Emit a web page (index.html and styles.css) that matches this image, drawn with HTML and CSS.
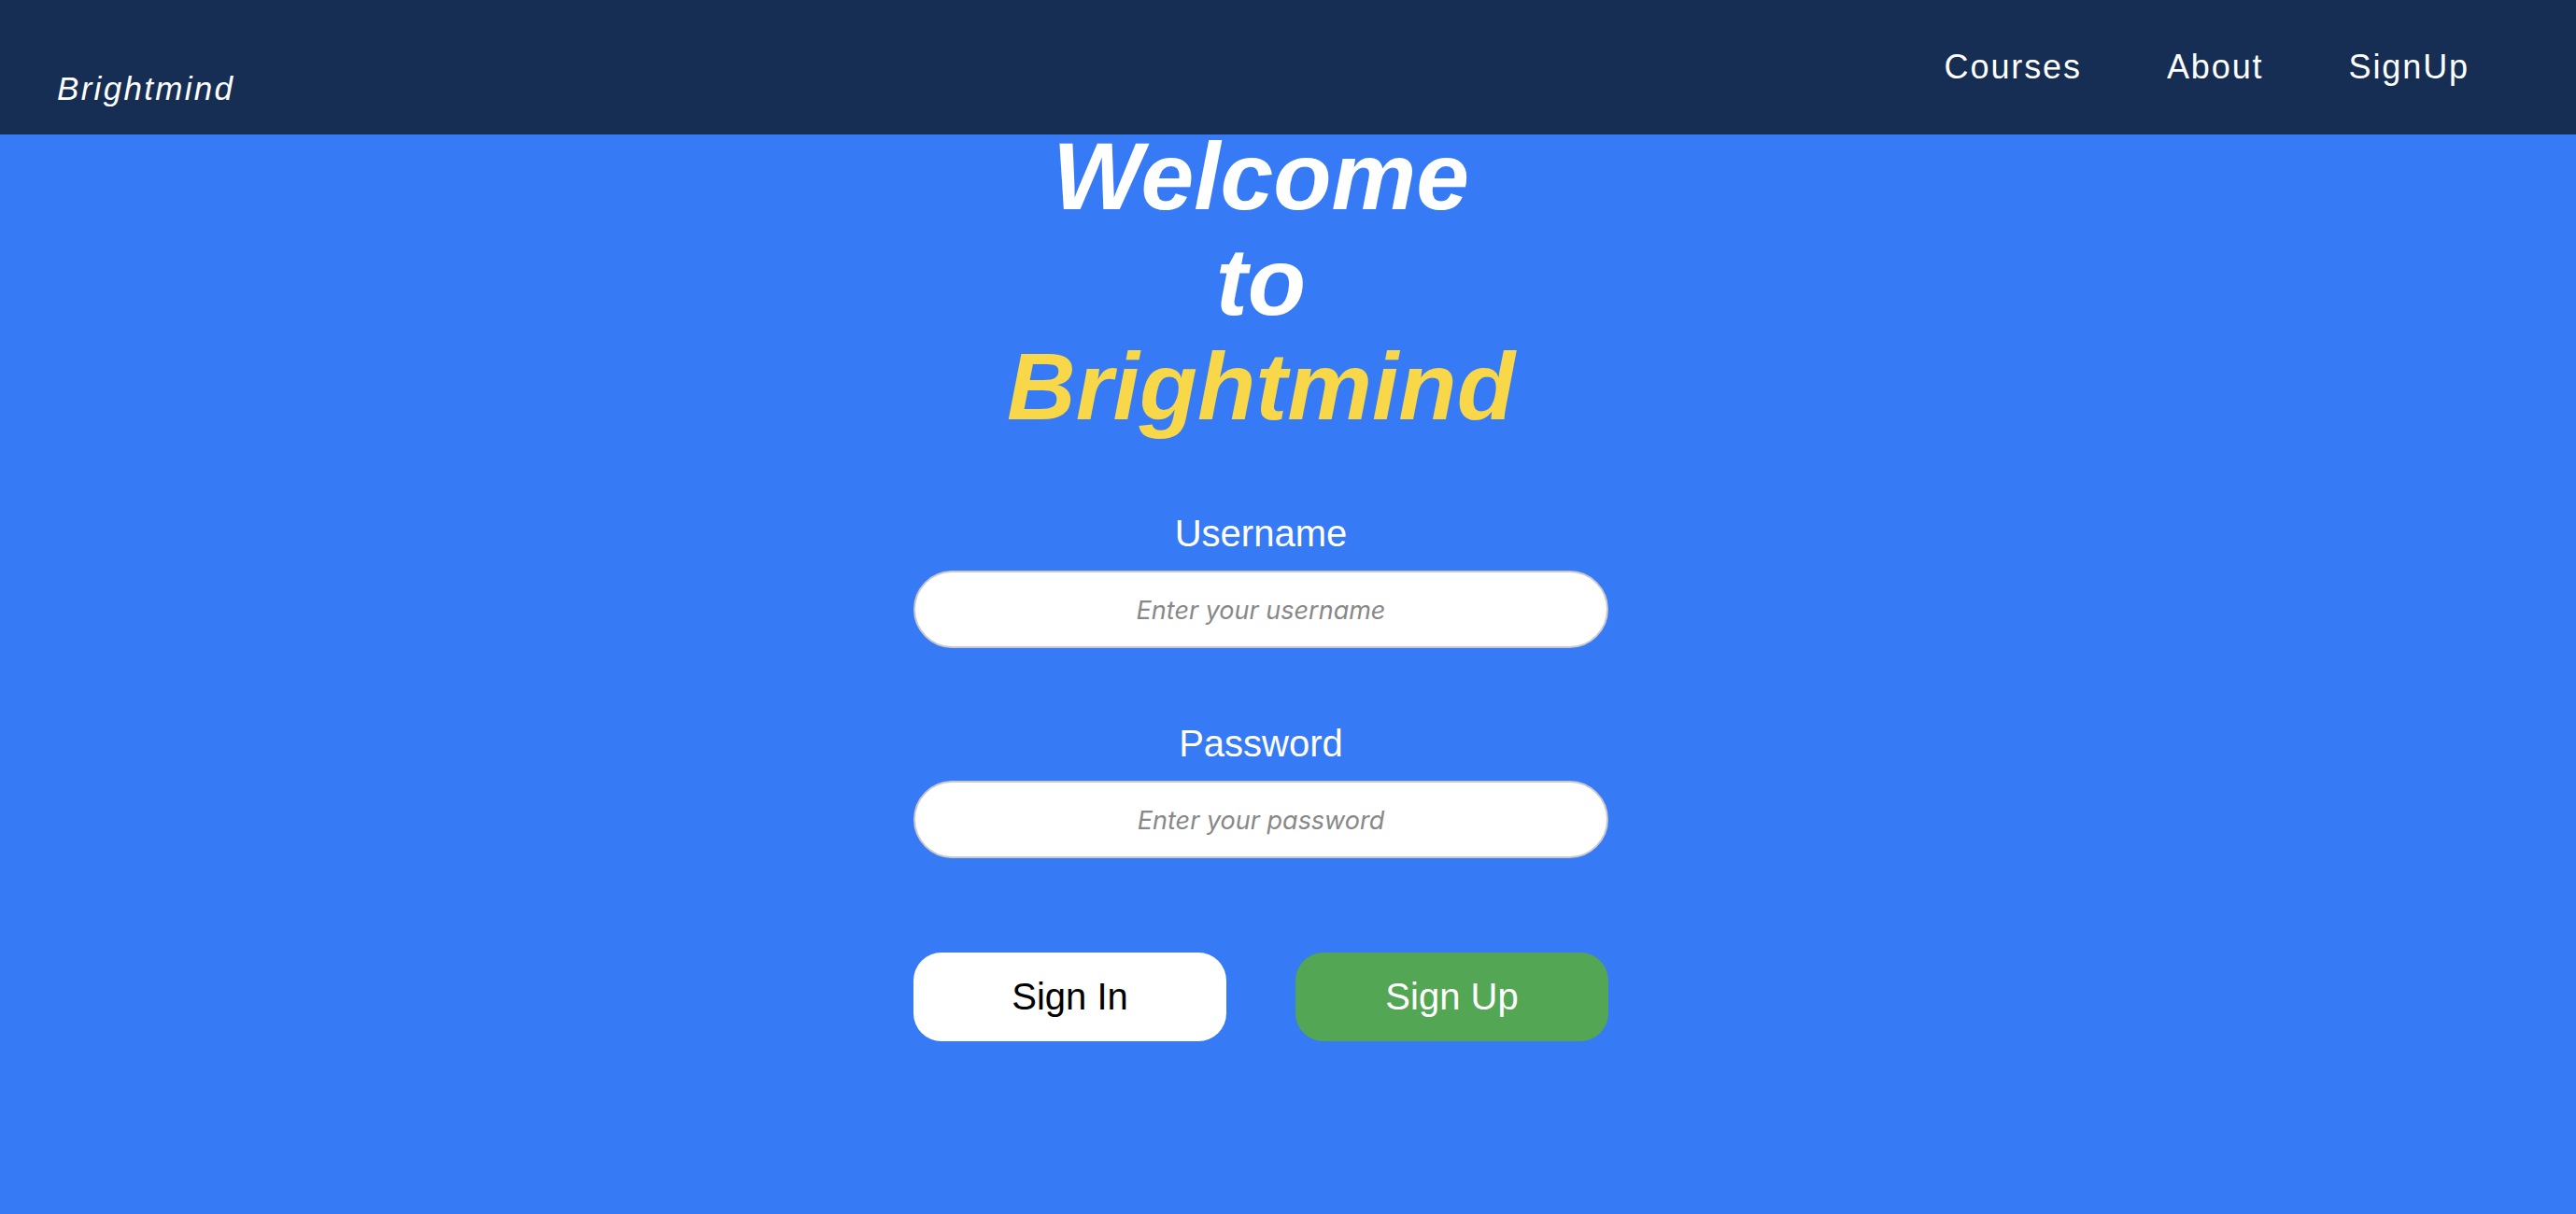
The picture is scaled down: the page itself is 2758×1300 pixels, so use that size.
FILE: index.html
```html
<!DOCTYPE html>
<html lang="en">
<head>
<meta charset="utf-8">
<title>Brightmind</title>
<link rel="stylesheet" href="styles.css">
</head>
<body>
<header class="topbar">
  <div class="logo">Brightmind</div>
  <nav class="nav">
    <a href="#" class="nav-link">Courses</a>
    <a href="#" class="nav-link">About</a>
    <a href="#" class="nav-link">SignUp</a>
  </nav>
</header>
<main class="main">
  <h1 class="title">
    <span class="title-line">Welcome</span>
    <span class="title-line">to</span>
    <span class="title-line accent">Brightmind</span>
  </h1>
  <form class="login" onsubmit="return false;">
    <div class="field">
      <label class="field-label" for="username">Username</label>
      <input class="field-input" id="username" type="text" placeholder="Enter your username">
    </div>
    <div class="field">
      <label class="field-label" for="password">Password</label>
      <input class="field-input" id="password" type="password" placeholder="Enter your password">
    </div>
    <div class="actions">
      <button class="btn btn-signin" type="submit">Sign In</button>
      <button class="btn btn-signup" type="button">Sign Up</button>
    </div>
  </form>
</main>
</body>
</html>
```

FILE: styles.css
```css
html, body {
  margin: 0;
  padding: 0;
}

body {
  background: #377af5;
  min-height: 100vh;
  font-family: "Liberation Sans", Arial, sans-serif;
  color: #ffffff;
}

.topbar {
  height: 144px;
  box-sizing: border-box;
  background: #162d54;
  display: flex;
  justify-content: space-between;
  align-items: flex-start;
  padding: 0 114px 0 61px;
}

.logo {
  margin-top: 75px;
  font-size: 35px;
  line-height: 40px;
  font-style: italic;
  letter-spacing: 2.3px;
  color: #ffffff;
}

.nav {
  display: flex;
  gap: 91px;
  margin-top: 51px;
}

.nav-link {
  font-size: 36px;
  line-height: 41px;
  letter-spacing: 1.9px;
  color: #ffffff;
  text-decoration: none;
}

.main {
  display: flex;
  flex-direction: column;
  align-items: center;
  padding-right: 58px;
}

.title {
  margin: -11px 0 0;
  font-size: 102px;
  line-height: 112.5px;
  font-weight: bold;
  font-style: italic;
  text-align: center;
  color: #ffffff;
}

.title-line {
  display: block;
}

.accent {
  color: #f8d748;
}

.login {
  width: 744px;
  margin-top: 77px;
  display: flex;
  flex-direction: column;
}

.field {
  display: flex;
  flex-direction: column;
}

.field + .field {
  margin-top: 79px;
}

.field-label {
  display: block;
  font-size: 40px;
  line-height: 46px;
  text-align: center;
  color: #ffffff;
  margin-bottom: 17px;
}

.field-input {
  box-sizing: border-box;
  width: 100%;
  height: 83px;
  border: 2px solid #c9c9c9;
  border-radius: 42px;
  background: #ffffff;
  font-family: Inter, "Noto Sans", sans-serif;
  font-style: italic;
  font-size: 27px;
  text-align: center;
  color: #333333;
  outline: none;
  padding: 2px 30px 0;
}

.field-input::placeholder {
  color: #888888;
  font-style: italic;
}

.actions {
  display: flex;
  gap: 74px;
  margin-top: 101px;
}

.btn {
  width: 335px;
  height: 95px;
  border: none;
  border-radius: 30px;
  font-family: "Liberation Sans", Arial, sans-serif;
  font-size: 40px;
  cursor: pointer;
}

.btn-signin {
  background: #ffffff;
  color: #000000;
}

.btn-signup {
  background: #53a653;
  color: #ffffff;
}
```
